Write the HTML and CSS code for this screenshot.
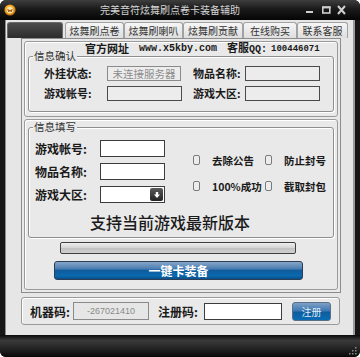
FILE: index.html
```html
<!DOCTYPE html>
<html lang="zh-CN">
    <head>
        <meta charset="UTF-8">
        <meta name="viewport" content="width=device-width, initial-scale=1.0">
        <title>完美音符炫舞刷点卷卡装备辅助</title>
        <link rel="stylesheet" href="styles.css">
    </head>
    <body>
        <div class="window">
            <div class="titlebar">
                <svg class="appIcon" viewBox="0 0 12 12">
                    <defs>
                        <radialGradient id="ico" cx="0.45" cy="0.4" r="0.6">
                            <stop offset="0" stop-color="#ffe7a0"/>
                            <stop offset="0.55" stop-color="#f5a623"/>
                            <stop offset="1" stop-color="#b86a08"/>
                        </radialGradient>
                    </defs>
                    <circle cx="6" cy="6" r="5.6" fill="url(#ico)"/>
                    <circle cx="6" cy="6.2" r="3.2" fill="#fbe2a4"/>
                    <path d="M3.8 5 L4.8 7.8 L6 6 L7.2 7.8 L8.2 5" fill="none" stroke="#8a4a0a" stroke-width="1"/>
                </svg>
                <span class="title">完美音符炫舞刷点卷卡装备辅助</span>
                <svg class="controls" viewBox="0 0 42 10">
                    <rect x="2" y="6" width="7" height="2" fill="#cfcfcf"/>
                    <rect x="18.8" y="2.2" width="7" height="5.8" fill="none" stroke="#cfcfcf" stroke-width="1.6"/>
                    <rect x="18" y="1.4" width="8.6" height="2" fill="#cfcfcf"/>
                    <path d="M34 1 L41 9 M41 1 L34 9" stroke="#cfcfcf" stroke-width="2"/>
                </svg>
            </div>
            <div class="frame">
                <div class="client">
                    <div class="tabs">
                        <div class="tab active"></div>
                        <div class="tab w59">炫舞刷点卷</div>
                        <div class="tab w59">炫舞刷喇叭</div>
                        <div class="tab w60">炫舞刷贡献</div>
                        <div class="tab w54">在线购买</div>
                        <div class="tab w51">联系客服</div>
                    </div>
                    <div class="page">
                        <div class="panel panelTop">
                            <div class="site">
                                <span class="strong">官方网址</span>
                                <span class="mono">www.x5kby.com</span>
                                <span class="strong">客服<span class="mono">QQ:</span></span>
                                <span class="mono num">100446071</span>
                            </div>
                            <div class="group confirm">
                                <span class="legend">信息确认</span>
                                <div class="confirmGrid">
                                    <span class="lbl">外挂状态:</span>
                                    <div class="box status">未连接服务器</div>
                                    <span class="lbl">物品名称:</span>
                                    <div class="box dark"></div>
                                    <span class="lbl">游戏帐号:</span>
                                    <div class="box dark"></div>
                                    <span class="lbl">游戏大区:</span>
                                    <div class="box dark"></div>
                                </div>
                            </div>
                        </div>
                        <div class="panel panelMain">
                            <div class="group fill">
                                <span class="legend">信息填写</span>
                                <div class="fillRow">
                                    <div class="form">
                                        <div class="formRow">
                                            <span class="lbl big">游戏帐号:</span>
                                            <div class="input"></div>
                                        </div>
                                        <div class="formRow">
                                            <span class="lbl big">物品名称:</span>
                                            <div class="input"></div>
                                        </div>
                                        <div class="formRow">
                                            <span class="lbl big">游戏大区:</span>
                                            <div class="input combo">
                                                <span class="drop">
                                                    <svg viewBox="0 0 8 8"><path d="M4 7 L1 3.6 H2.8 V1 H5.2 V3.6 H7 Z" fill="#fff"/></svg>
                                                </span>
                                            </div>
                                        </div>
                                    </div>
                                    <div class="checks">
                                        <span class="check"></span><span class="lbl opt">去除公告</span>
                                        <span class="check"></span><span class="lbl opt">防止封号</span>
                                        <span class="check"></span><span class="lbl opt">100%成功</span>
                                        <span class="check"></span><span class="lbl opt">截取封包</span>
                                    </div>
                                </div>
                                <div class="notice">支持当前游戏最新版本</div>
                            </div>
                            <div class="progress"></div>
                            <div class="goButton">一键卡装备</div>
                        </div>
                    </div>
                    <div class="panel reg">
                        <span class="lbl big">机器码:</span>
                        <div class="machine">-267021410</div>
                        <span class="lbl big regLbl">注册码:</span>
                        <div class="input regInput"></div>
                        <div class="regButton">注册</div>
                    </div>
                </div>
            </div>
            <div class="statusbar">
                <svg class="grip" viewBox="0 0 9 9">
                    <rect x="7" y="1" width="1.5" height="1.5" fill="#8a8a8a"/>
                    <rect x="4" y="4" width="1.5" height="1.5" fill="#8a8a8a"/>
                    <rect x="7" y="4" width="1.5" height="1.5" fill="#8a8a8a"/>
                    <rect x="1" y="7" width="1.5" height="1.5" fill="#8a8a8a"/>
                    <rect x="4" y="7" width="1.5" height="1.5" fill="#8a8a8a"/>
                    <rect x="7" y="7" width="1.5" height="1.5" fill="#8a8a8a"/>
                </svg>
            </div>
        </div>
    </body>
</html>
```

FILE: styles.css
```css
* {
    box-sizing: border-box;
}
body {
    margin: 0;
    background: #fff;
    font-family: "Noto Sans CJK SC", "Liberation Sans", sans-serif;
    color: #1a1a1a;
}
.window {
    width: 360px;
    height: 357px;
    background: #111;
    border-radius: 6px;
    overflow: hidden;
    display: flex;
    flex-direction: column;
}
.titlebar {
    height: 20px;
    flex: none;
    display: flex;
    align-items: center;
    padding-left: 4px;
    background: linear-gradient(#3e3e3e, #1a1a1a 45%, #050505);
}
.appIcon {
    width: 12px;
    height: 12px;
}
.title {
    margin-left: 84px;
    font-size: 10px;
    line-height: 12px;
    color: #d4d4d4;
}
.controls {
    width: 42px;
    height: 10px;
    margin-left: auto;
    margin-right: 14px;
}
.frame {
    height: 315px;
    flex: none;
    padding: 0 5px;
    background: #161616;
}
.client {
    height: 100%;
    padding: 2px 0 0 1px;
    background: #e6e6e6;
    border-left: 1px solid #8c8c8c;
    border-right: 2px solid #9a9a9a;
}
.tabs {
    display: flex;
    height: 16px;
}
.tab {
    height: 16px;
    border: 1px solid #a2a2a2;
    border-bottom: none;
    border-radius: 3px 3px 0 0;
    background: linear-gradient(#f6f6f6, #dedede);
    font-size: 10px;
    line-height: 15px;
    text-align: center;
    color: #333;
}
.tab.active {
    width: 56px;
    margin-right: 2px;
    border-color: #6a6a6a;
    background: linear-gradient(#4c4c4c, #2c2c2c);
}
.w59 { width: 59px; }
.w60 { width: 60px; }
.w54 { width: 54px; }
.w51 { width: 51px; }
.page {
    width: 320px;
    height: 255px;
    margin-left: 14px;
    padding: 2px;
    border: 1px solid #8c8c8c;
    background: #e9e9e9;
    display: flex;
    flex-direction: column;
    gap: 2px;
}
.panel {
    border: 1px solid #9a9a9a;
    border-radius: 3px;
    box-shadow: inset 1px 1px 0 #fff;
    background: #e9e9e9;
}
.panelTop {
    height: 76px;
    flex: none;
}
.panelMain {
    height: 171px;
    flex: none;
}
.site {
    margin-top: 1px;
    padding-left: 60px;
    height: 11px;
    display: flex;
    align-items: center;
    gap: 10px;
    white-space: nowrap;
}
.strong {
    font-size: 11px;
    line-height: 11px;
    font-weight: 700;
}
.mono {
    font-family: "Liberation Mono", monospace;
    font-size: 10px;
    font-weight: 700;
}
.num {
    margin-left: -6px;
    font-size: 9px;
}
.group {
    position: relative;
    width: 306px;
    margin-left: 3px;
    border: 1px solid #8e8e8e;
    border-radius: 3px;
    box-shadow: inset 1px 1px 0 #fff, 1px 1px 0 #fff;
}
.legend {
    position: absolute;
    top: -7px;
    left: 4px;
    padding: 0 1px;
    font-size: 10.5px;
    line-height: 12px;
    color: #333;
    background: #e9e9e9;
}
.confirm {
    height: 56px;
    margin-top: 2px;
}
.confirmGrid {
    display: grid;
    grid-template-columns: 63px 86px 52px 75px;
    grid-auto-rows: 15px;
    row-gap: 5px;
    align-items: center;
    padding: 9px 0 0 15px;
}
.lbl {
    font-size: 11px;
    line-height: 13px;
    font-weight: 700;
    white-space: nowrap;
}
.lbl.big {
    font-size: 12px;
}
.box {
    width: 75px;
    height: 15px;
    background: #ececec;
}
.box.status {
    width: 74px;
    border: 1px solid #8a8a8a;
    color: #8c8c8c;
    font-size: 10.5px;
    line-height: 13px;
    text-align: center;
}
.box.dark {
    border: 1px solid #4a4a4a;
}
.fill {
    height: 111px;
    margin-top: 7px;
}
.fillRow {
    display: flex;
    padding: 12px 0 0 6px;
}
.form {
    display: flex;
    flex-direction: column;
    gap: 6px;
}
.formRow {
    display: flex;
    align-items: center;
}
.formRow .lbl {
    width: 65px;
}
.input {
    width: 65px;
    height: 17px;
    border: 1px solid #3c3c3c;
    background: #fff;
}
.combo {
    display: flex;
    justify-content: flex-end;
    align-items: center;
    padding-right: 1px;
}
.drop {
    width: 13px;
    height: 13px;
    border-radius: 2px;
    background: linear-gradient(#5a5a5a, #222);
    display: flex;
    align-items: center;
    justify-content: center;
}
.drop svg {
    width: 8px;
    height: 8px;
}
.checks {
    margin: 15px 0 0 28px;
    display: grid;
    grid-template-columns: 7px 65px 7px auto;
    grid-auto-rows: 10px;
    row-gap: 16px;
    align-items: center;
    align-self: flex-start;
}
.check {
    width: 7px;
    height: 10px;
    border: 1px solid #7a7a7a;
    border-radius: 2px;
    background: #ececec;
}
.opt {
    margin-left: 12px;
    font-size: 10.5px;
}
.notice {
    margin: 9px 0 0 61px;
    font-size: 16px;
    line-height: 20px;
    font-weight: 500;
}
.progress {
    width: 236px;
    height: 12px;
    margin: 4px 0 0 35px;
    border: 1px solid #3e3e3e;
    border-radius: 2px;
    background: linear-gradient(#eeeeee, #d6d6d6 45%, #c2c2c2 55%, #d0d0d0);
}
.goButton {
    width: 249px;
    height: 19px;
    margin: 7px 0 0 29px;
    border: 1px solid #2c3e55;
    border-radius: 3px;
    background: linear-gradient(#87a6c8, #4b7db2 40%, #0f5c9c 50%, #0a69b0 80%, #0a4f88);
    color: #fff;
    font-size: 12px;
    line-height: 17px;
    font-weight: 700;
    text-align: center;
}
.reg {
    width: 319px;
    height: 28px;
    margin: 4px 0 0 14px;
    display: flex;
    align-items: center;
    padding-left: 8px;
}
.reg .lbl {
    width: 43px;
}
.machine {
    width: 76px;
    height: 18px;
    border: 1px solid #8a8a8a;
    background: #e6e6e6;
    color: #8a8a8a;
    font-family: "Liberation Sans", sans-serif;
    font-size: 9px;
    line-height: 16px;
    text-align: center;
}
.reg .regLbl {
    width: 46px;
    margin-left: 9px;
}
.regInput {
    width: 78px;
}
.regButton {
    width: 39px;
    height: 19px;
    margin-left: 10px;
    border: 1px solid #5b6f86;
    border-radius: 3px;
    background: linear-gradient(#7ea0c6, #3f78b2 45%, #0c5d9e 55%, #0a6cb5);
    color: #dfeaf6;
    font-size: 10px;
    line-height: 17px;
    text-align: center;
}
.statusbar {
    flex: 1;
    display: flex;
    justify-content: flex-end;
    align-items: flex-end;
    padding: 0 3px 2px 0;
    background: linear-gradient(#0a0a0a, #3a3a3a 25%, #1e1e1e 70%, #080808);
}
.grip {
    width: 9px;
    height: 9px;
}
```
